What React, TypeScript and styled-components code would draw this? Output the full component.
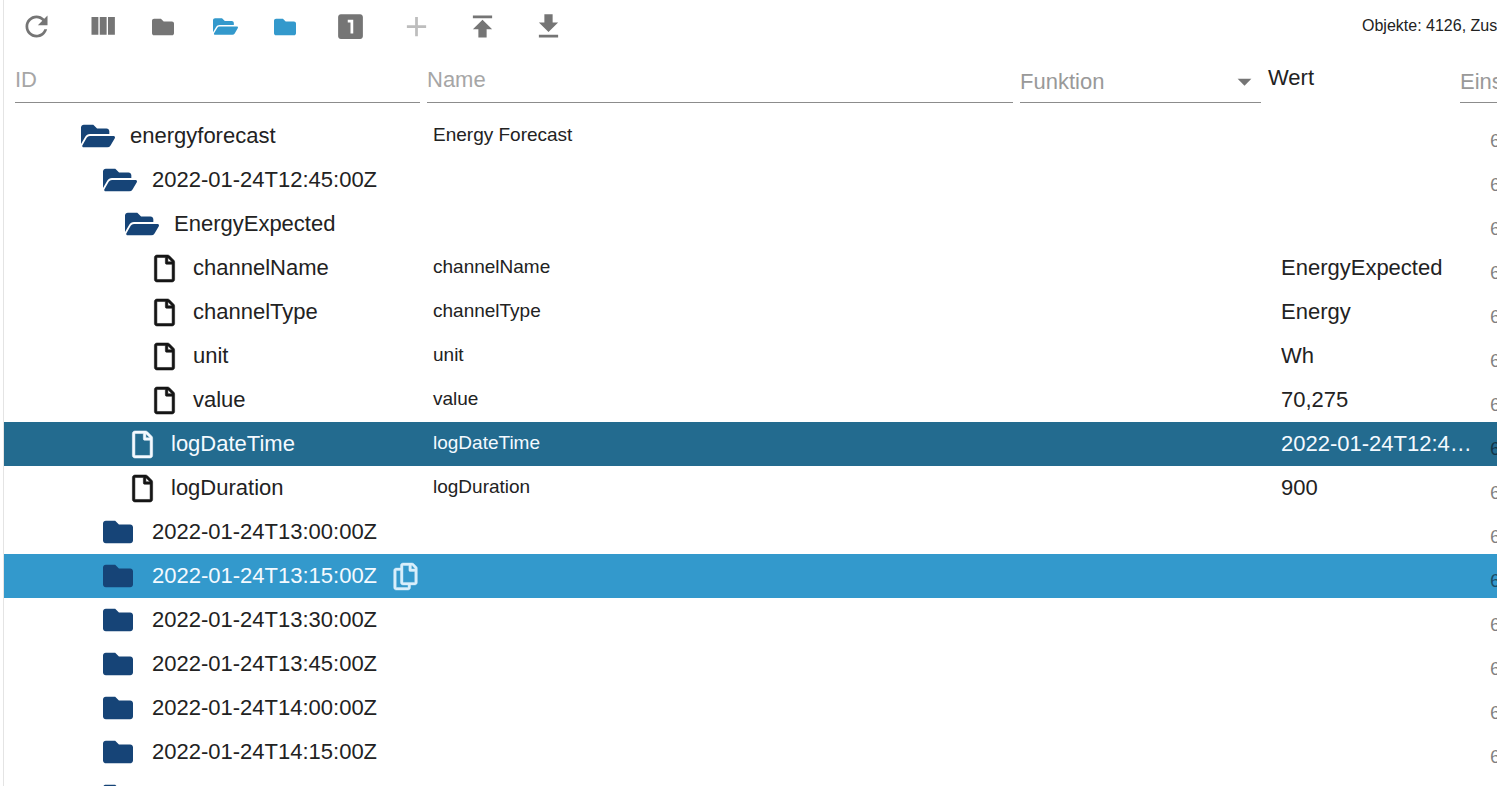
import React from 'react';
import styled, { createGlobalStyle, css } from 'styled-components';
import { FaFolder, FaFolderOpen, FaRegCopy, FaRegFile } from 'react-icons/fa';

const GlobalStyle = createGlobalStyle`
  *, *::before, *::after { box-sizing: border-box; }
  body {
    margin: 0;
    background: #fff;
    color: #222;
    font-family: "Liberation Sans", Arial, sans-serif;
    font-size: 22px;
  }
  button, input, select { font: inherit; color: inherit; }
`;

const Page = styled.main`
  height: 100vh;
  margin-left: 3px;
  border-left: 1px solid #e4e4e4;
  overflow: hidden;
`;

const Toolbar = styled.div`
  display: flex;
  align-items: center;
  height: 53px;
  margin-left: -1px;
`;

const FolderTools = styled.div`
  display: flex;
  gap: 1px;
`;

const ToolButton = styled.button<{ $tone?: string }>`
  display: flex;
  align-items: center;
  justify-content: center;
  width: 66px;
  height: 53px;
  padding: 0;
  border: 0;
  background: none;
  color: ${(p) => p.$tone ?? '#757575'};
`;

const FolderButton = styled(ToolButton)`
  justify-content: flex-start;
  width: 60px;
  padding-left: 17px;
`;

const Summary = styled.div`
  width: 135px;
  margin-left: auto;
  overflow: hidden;
  white-space: nowrap;
  font-size: 16px;
  line-height: 52px;
  align-self: flex-start;
`;

const Filters = styled.div`
  display: grid;
  grid-template-columns: 405px minmax(0, 1fr) 241px 185px 37px;
  gap: 7px;
  height: 50px;
  margin-bottom: 11px;
  padding-left: 11px;
`;

const fieldLine = css`
  height: 46px;
  margin: 0;
  border: 0;
  border-bottom: 1px solid #8c8c8c;
  border-radius: 0;
  background: none;
  outline: 0;
`;

const TextField = styled.input`
  ${fieldLine}
  width: 100%;
  margin-top: 4px;
  padding: 0;
  &::placeholder { color: #a6a6a6; opacity: 1; }
`;

const SelectBox = styled.div`
  position: relative;
  margin-top: 4px;
`;

const SelectField = styled.select<{ $wide?: boolean }>`
  ${fieldLine}
  width: ${(p) => (p.$wide ? '200px' : '100%')};
  padding: 4px 0 0;
  appearance: none;
  color: #999;
`;

const Caret = styled.svg`
  position: absolute;
  top: 8px;
  right: 0;
  pointer-events: none;
  fill: #757575;
`;

const ColumnTitle = styled.div`
  line-height: 49px;
`;

const Tree = styled.table`
  width: 100%;
  table-layout: fixed;
  border-collapse: collapse;
`;

const IdCol = styled.col` width: 424px; `;
const ValueCol = styled.col` width: 200px; `;
const RightsCol = styled.col` width: 20px; `;

type RowState = 'selected' | 'hover' | undefined;

const Row = styled.tr<{ $state: RowState }>`
  height: 44px;
  background: ${(p) => (p.$state === 'selected' ? '#236b8f' : p.$state === 'hover' ? '#3399cc' : 'transparent')};
  color: ${(p) => (p.$state ? '#f4faff' : '#222')};
`;

const IdCell = styled.th`
  padding: 0 8px 0 0;
  font-weight: 400;
  text-align: left;
`;

const Node = styled.div<{ $level: number }>`
  display: flex;
  align-items: center;
  height: 44px;
  padding-left: ${(p) => 77 + p.$level * 22}px;
`;

const FolderIcon = styled.span`
  display: flex;
  width: 34px;
  margin-right: 15px;
  color: #164477;
`;

const FileIcon = styled.span<{ $light: boolean }>`
  display: flex;
  margin: 0 15px 0 4px;
  color: ${(p) => (p.$light ? '#f4faff' : '#151515')};
  svg {
    overflow: visible;
    stroke-width: 10px;
  }
`;

const NodeName = styled.span`
  line-height: 44px;
`;

const CopyButton = styled.button`
  display: flex;
  width: 28px;
  margin-left: auto;
  padding: 0;
  border: 0;
  background: none;
  color: #d9effb;
  svg {
    overflow: visible;
    stroke-width: 8px;
  }
`;

const NameCell = styled.td`
  padding: 0 0 2px 5px;
  font-size: 19px;
`;

const ValueCell = styled.td`
  padding: 0 0 0 4px;
`;

const Value = styled.div`
  height: 44px;
  overflow: hidden;
  line-height: 44px;
  text-overflow: ellipsis;
  white-space: nowrap;
`;

const RightsCell = styled.td`
  padding: 10px 0 0 13px;
  color: rgba(0, 0, 0, 0.5);
  font-size: 19px;
`;

const Glyph = ({ d }: { d: string }) => (
  <svg width="33" height="33" viewBox="0 0 24 24" fill="currentColor" aria-hidden="true">
    <path d={d} />
  </svg>
);

type Item = {
  id: string;
  level: number;
  kind: 'open' | 'closed' | 'file';
  name?: string;
  value?: string;
  state?: RowState;
};

const items: Item[] = [
  { id: 'energyforecast', level: 0, kind: 'open', name: 'Energy Forecast' },
  { id: '2022-01-24T12:45:00Z', level: 1, kind: 'open' },
  { id: 'EnergyExpected', level: 2, kind: 'open' },
  { id: 'channelName', level: 3, kind: 'file', name: 'channelName', value: 'EnergyExpected' },
  { id: 'channelType', level: 3, kind: 'file', name: 'channelType', value: 'Energy' },
  { id: 'unit', level: 3, kind: 'file', name: 'unit', value: 'Wh' },
  { id: 'value', level: 3, kind: 'file', name: 'value', value: '70,275' },
  { id: 'logDateTime', level: 2, kind: 'file', name: 'logDateTime', value: '2022-01-24T12:45:00Z', state: 'selected' },
  { id: 'logDuration', level: 2, kind: 'file', name: 'logDuration', value: '900' },
  { id: '2022-01-24T13:00:00Z', level: 1, kind: 'closed' },
  { id: '2022-01-24T13:15:00Z', level: 1, kind: 'closed', state: 'hover' },
  { id: '2022-01-24T13:30:00Z', level: 1, kind: 'closed' },
  { id: '2022-01-24T13:45:00Z', level: 1, kind: 'closed' },
  { id: '2022-01-24T14:00:00Z', level: 1, kind: 'closed' },
  { id: '2022-01-24T14:15:00Z', level: 1, kind: 'closed' },
  { id: '2022-01-24T14:30:00Z', level: 1, kind: 'closed' },
];

const NodeIcon = ({ item }: { item: Item }) => {
  if (item.kind === 'file') {
    return <FileIcon $light={item.state === 'selected'}><FaRegFile size={27} /></FileIcon>;
  }
  return (
    <FolderIcon>
      {item.kind === 'open' ? <FaFolderOpen size={34} /> : <FaFolder size={30} />}
    </FolderIcon>
  );
};

const TreeRow = ({ item }: { item: Item }) => (
  <Row $state={item.state}>
    <IdCell scope="row">
      <Node $level={item.level}>
        <NodeIcon item={item} />
        <NodeName>{item.id}</NodeName>
        {item.state === 'hover' && (
          <CopyButton aria-label="Kopieren"><FaRegCopy size={27} /></CopyButton>
        )}
      </Node>
    </IdCell>
    <NameCell>{item.name}</NameCell>
    <ValueCell><Value>{item.value}</Value></ValueCell>
    <RightsCell>6</RightsCell>
  </Row>
);

export default function App() {
  return (
    <Page>
      <GlobalStyle />
      <Toolbar>
        <ToolButton aria-label="Aktualisieren">
          <Glyph d="M17.65 6.35C16.2 4.9 14.21 4 12 4c-4.42 0-7.99 3.58-7.99 8s3.57 8 7.99 8c3.73 0 6.84-2.55 7.73-6h-2.08c-.82 2.33-3.04 4-5.65 4-3.31 0-6-2.69-6-6s2.69-6 6-6c1.66 0 3.14.69 4.22 1.78L13 11h7V4l-2.35 2.35z" />
        </ToolButton>
        <ToolButton aria-label="Spalten">
          <Glyph d="M10 18h5V5h-5v13zm-6 0h5V5H4v13zM16 5v13h5V5h-5z" />
        </ToolButton>
        <FolderTools>
          <FolderButton aria-label="Alle schließen"><FaFolder size={22} /></FolderButton>
          <FolderButton aria-label="Alle öffnen" $tone="#3399cc"><FaFolderOpen size={25} /></FolderButton>
          <FolderButton aria-label="Eine Ebene schließen" $tone="#3399cc"><FaFolder size={22} /></FolderButton>
        </FolderTools>
        <ToolButton aria-label="Zustände">
          <Glyph d="M19 3H5c-1.1 0-2 .9-2 2v14c0 1.1.9 2 2 2h14c1.1 0 2-.9 2-2V5c0-1.1-.9-2-2-2zm-5 14h-2V9h-2V7h4v10z" />
        </ToolButton>
        <ToolButton aria-label="Hinzufügen" $tone="#bdbdbd">
          <Glyph d="M19 13h-6v6h-2v-6H5v-2h6V5h2v6h6v2z" />
        </ToolButton>
        <ToolButton aria-label="Hochladen">
          <Glyph d="M5 4v2h14V4H5zm0 10h4v6h6v-6h4l-7-7-7 7z" />
        </ToolButton>
        <ToolButton aria-label="Herunterladen">
          <Glyph d="M19 9h-4V3H9v6H5l7 7 7-7zM5 18v2h14v-2H5z" />
        </ToolButton>
        <Summary>Objekte: 4126, Zustände</Summary>
      </Toolbar>

      <Filters>
        <TextField placeholder="ID" aria-label="ID" />
        <TextField placeholder="Name" aria-label="Name" />
        <SelectBox>
          <SelectField aria-label="Funktion"><option>Funktion</option></SelectField>
          <Caret width="33" height="33" viewBox="0 0 24 24" aria-hidden="true"><path d="M7 10l5 5 5-5z" /></Caret>
        </SelectBox>
        <ColumnTitle>Wert</ColumnTitle>
        <SelectBox>
          <SelectField $wide aria-label="Einstellungen"><option>Einstellungen</option></SelectField>
        </SelectBox>
      </Filters>

      <Tree aria-label="Objekte">
        <colgroup><IdCol /><col /><ValueCol /><RightsCol /></colgroup>
        <tbody>
          {items.map((item) => <TreeRow key={item.id} item={item} />)}
        </tbody>
      </Tree>
    </Page>
  );
}
